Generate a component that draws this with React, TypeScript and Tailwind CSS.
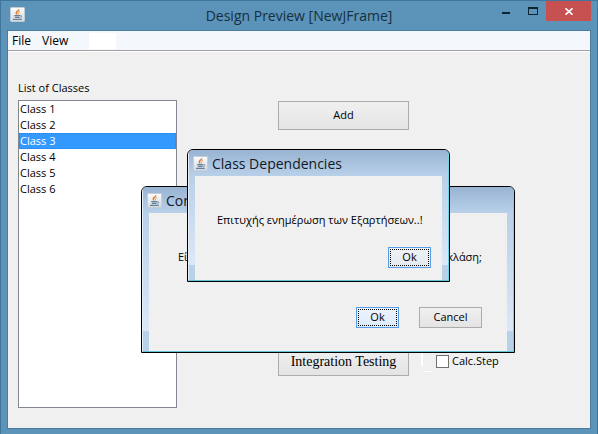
import React from 'react';

const uiFont = "font-['Open_Sans','Noto_Sans',sans-serif]";

function JavaIcon() {
  return (
    <svg width="15" height="15" viewBox="0 0 16 16" className="shrink-0" aria-hidden="true">
      <defs>
        <linearGradient id="tile" x1="0" y1="0" x2="0" y2="1">
          <stop offset="0" stopColor="#fdfdfd" />
          <stop offset="1" stopColor="#d3d9df" />
        </linearGradient>
      </defs>
      <rect x="0.5" y="0.5" width="15" height="15" rx="1" fill="url(#tile)" stroke="#c3ccd4" />
      <path d="M9.400 2.600C9.600 4.200 6.400 4.600 6.600 6.400c.1.700.8 1 1.100 1.500" fill="none" stroke="#dd7a30" strokeWidth="1.400" />
      <path d="M10.600 4.800C9 5.300 8.400 5.900 9 6.800c.3.500.2.900-.2 1.300" fill="none" stroke="#e69a55" strokeWidth="1" />
      <path d="M4.500 9.200h6.200M5.200 11h5M3.200 13.200h9.400" fill="none" stroke="#64829c" strokeWidth="1.200" />
      <path d="M10.800 9.300c2.200-.6 2.400 1.400.1 2.200" fill="none" stroke="#64829c" strokeWidth="1" />
    </svg>
  );
}

type ButtonProps = { children: React.ReactNode; className?: string };

function PlainButton({ children, className = '' }: ButtonProps) {
  return (
    <button
      type="button"
      className={`border border-[#acacac] bg-linear-to-b from-[#f0f0f0] to-[#e4e4e4] text-center ${className}`}
    >
      {children}
    </button>
  );
}

function FocusedButton({ children, className = '' }: ButtonProps) {
  return (
    <button
      type="button"
      className={`h-[21px] w-[43px] border border-[#569de5] bg-linear-to-b p-px ${className}`}
    >
      <span className="flex h-full items-center justify-center border border-dotted border-black">{children}</span>
    </button>
  );
}

type DialogProps = { title: string; className: string; bodyClassName: string; children: React.ReactNode };

function Dialog({ title, className, bodyClassName, children }: DialogProps) {
  return (
    <section
      role="dialog"
      aria-label={title}
      className={`absolute overflow-hidden rounded-t-md border border-black bg-[#b9d1ea] ${className}`}
    >
      <div className="border-r border-b border-l border-r-[#6fd6ea] border-b-[#5fc3d3] border-l-[#e6eef7]">
        <header className="flex h-[26px] items-center gap-1 bg-linear-to-b from-[#98b4d2] to-[#b9d0e9] pl-1">
          <JavaIcon />
          <h2 className="text-[14px] whitespace-nowrap text-[#111827]">{title}</h2>
        </header>
        <div className="bg-linear-to-b from-[#b9d0e9] from-0% via-[#dbe8f7] via-85% to-[#b9d0e9] to-86% px-1.5">
          <div className={`bg-[#f0f0f0] ${bodyClassName}`}>{children}</div>
        </div>
      </div>
    </section>
  );
}

const classes = ['Class 1', 'Class 2', 'Class 3', 'Class 4', 'Class 5', 'Class 6'];

export default function App() {
  return (
    <div className={`relative border border-b-0 border-[#41759b] bg-[#5c93b9] pb-1.5 text-[11px] text-black ${uiFont}`}>
      <header className="relative flex h-[29px] items-center justify-center">
        <div className="absolute top-1.5 left-[9px]">
          <JavaIcon />
        </div>
        <h1 className="text-[14px] text-[#16303f]">Design Preview [NewJFrame]</h1>
        <div className="absolute top-0 right-1.5 flex h-5">
          <button type="button" aria-label="Minimize" className="flex w-[27px] items-center justify-center pt-1">
            <span className="h-0.5 w-2 bg-[#10242f]" />
          </button>
          <button type="button" aria-label="Maximize" className="flex w-[27px] items-center justify-center">
            <span className="h-2 w-2.5 border border-t-2 border-[#10242f]" />
          </button>
          <button type="button" aria-label="Close" className="flex w-[45px] items-center justify-center bg-[#c75050]">
            <svg width="8" height="7" viewBox="0 0 8 7" aria-hidden="true">
              <path d="M0.500 0.300L7.500 6.700M7.500 0.300L0.500 6.700" stroke="#fff" strokeWidth="1.600" />
            </svg>
          </button>
        </div>
      </header>

      <div className="mx-1.5 border border-[#4b7b9d] bg-[#f0f0f0]">
        <nav className="flex h-5 items-center gap-[11px] border-b border-[#a0a0a0] bg-[#f4f7fb] pl-1 text-[12px]">
          <button type="button">File</button>
          <button type="button">View</button>
          <span className="ml-2.5 h-4 w-[27px] bg-white" />
        </nav>

        <main className="flex border-t border-white pt-7 pr-4 pb-5 pl-2.5">
          <div className="w-[159px] shrink-0">
            <h2 id="classes-label" className="h-5 leading-4">List of Classes</h2>
            <ul
              role="listbox"
              aria-labelledby="classes-label"
              className="h-[308px] border border-[#828790] bg-white"
            >
              {classes.map((name) => (
                <li
                  key={name}
                  role="option"
                  aria-selected={name === 'Class 3'}
                  className={
                    name === 'Class 3'
                      ? 'h-4 bg-[#3399ff] pl-px leading-4 text-white outline-1 -outline-offset-1 outline-dotted outline-[#3f7fb5]'
                      : 'h-4 pl-px leading-4'
                  }
                >
                  {name}
                </li>
              ))}
            </ul>
          </div>

          <div className="flex flex-1 flex-col justify-between pt-[21px] pb-8 pl-[101px]">
            <PlainButton className="h-[29px] w-[131px]">Add</PlainButton>
            <div className="flex items-center">
              <PlainButton className="h-[29px] w-[131px] font-['Liberation_Serif',serif] text-[14px]">
                Integration Testing
              </PlainButton>
              <span className="ml-3 flex h-5 w-3 flex-col justify-between" aria-hidden="true">
                <span className="h-3.5 w-0.5 bg-white" />
                <span className="h-px w-2.5 self-end bg-white" />
              </span>
              <label className="ml-[3px] flex items-center gap-[3px]">
                <input
                  type="checkbox"
                  className="size-[13px] appearance-none border border-[#707070] bg-white"
                />
                Calc.Step
              </label>
            </div>
          </div>
        </main>
      </div>

      <Dialog
        title="Con"
        className="top-[185px] left-[140px] w-[374px]"
        bodyClassName="flex h-[138px] flex-col justify-between pt-9 pb-[23px]"
      >
        <p className="flex justify-between pr-[25px] pl-[29px] leading-4">
          <span>Εί</span>
          <span>κλάση;</span>
        </p>
        <div className="flex justify-end gap-5 pr-[25px]">
          <FocusedButton className="from-[#edf4fc] to-[#dcebfa]">Ok</FocusedButton>
          <PlainButton className="h-[21px] w-[63px]">Cancel</PlainButton>
        </div>
      </Dialog>

      <Dialog
        title="Class Dependencies"
        className="top-[148px] left-[186px] w-[263px]"
        bodyClassName="flex h-[104px] flex-col justify-between pt-9 pb-3"
      >
        <p className="pl-[22px] leading-4">Επιτυχής ενημέρωση των Εξαρτήσεων..!</p>
        <div className="flex justify-end pr-[11px]">
          <FocusedButton className="from-[#f0f2f4] to-[#e4eaf0]">Ok</FocusedButton>
        </div>
      </Dialog>
    </div>
  );
}
